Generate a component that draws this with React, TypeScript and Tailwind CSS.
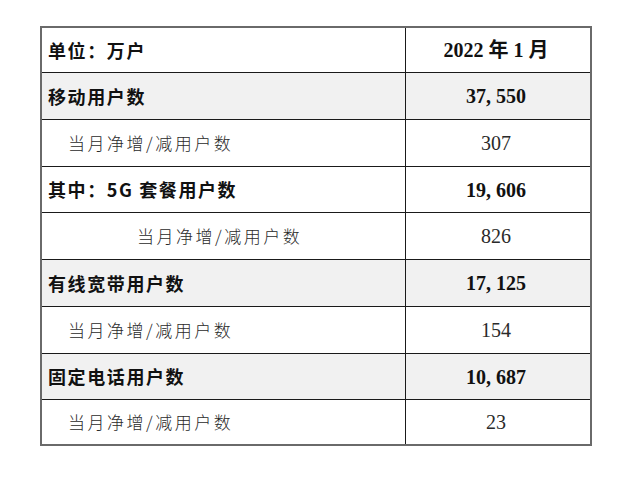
import React from "react";

type Row = { label: string; value: string; kind: "head" | "bold" | "sub" | "sub2"; h: string };

const rows: Row[] = [
  { label: "单位：万户", value: "2022 年 1 月", kind: "head", h: "h-[44px]" },
  { label: "移动用户数", value: "37, 550", kind: "bold", h: "h-[47px]" },
  { label: "当月净增/减用户数", value: "307", kind: "sub", h: "h-[47px]" },
  { label: "其中：5G 套餐用户数", value: "19, 606", kind: "head", h: "h-[46px]" },
  { label: "当月净增/减用户数", value: "826", kind: "sub2", h: "h-[47px]" },
  { label: "有线宽带用户数", value: "17, 125", kind: "bold", h: "h-[47px]" },
  { label: "当月净增/减用户数", value: "154", kind: "sub", h: "h-[47px]" },
  { label: "固定电话用户数", value: "10, 687", kind: "bold", h: "h-[46px]" },
  { label: "当月净增/减用户数", value: "23", kind: "sub", h: "h-[45px]" },
];

const numFont = { fontFamily: '"Liberation Serif", "Noto Sans CJK SC", serif' };
const labelFont = { fontFamily: '"Noto Sans CJK SC", sans-serif' };

export default function App() {
  return (
    <div className="w-[630px] h-[491px] bg-white pt-[26px] pl-[40px]">
      <div className="w-[552px] border-2 border-[#6a6a6a] flex flex-col">
        {rows.map((r, i) => {
          const bold = r.kind === "head" || r.kind === "bold";
          const bg = r.kind === "bold" ? "bg-[#f1f1f1]" : "bg-white";
          return (
            <div
              key={i}
              className={`grid grid-cols-[364px_1fr] ${r.h} ${bg} ${i > 0 ? "border-t border-[#1a1a1a]" : ""}`}
            >
              <div
                className={`flex items-center border-r border-[#1a1a1a] ${
                  r.kind === "sub2" ? "pl-[95px]" : r.kind === "sub" ? "pl-[26px]" : "pl-[6px]"
                }`}
              >
                {bold ? (
                  <span className="text-[18px] font-bold tracking-[1.6px] text-[#111]" style={labelFont}>
                    {r.label}
                  </span>
                ) : (
                  <span
                    className="text-[17px] tracking-[2.5px] text-[#2a2a2a]"
                    style={{ ...labelFont, fontWeight: 300 }}
                  >
                    {r.label}
                  </span>
                )}
              </div>
              <div className="flex items-center justify-center pr-[4px]">
                {bold ? (
                  <span className="text-[20px] font-bold text-[#111]" style={numFont}>
                    {r.value}
                  </span>
                ) : (
                  <span className="text-[20px] text-[#2a2a2a]" style={numFont}>
                    {r.value}
                  </span>
                )}
              </div>
            </div>
          );
        })}
      </div>
    </div>
  );
}
